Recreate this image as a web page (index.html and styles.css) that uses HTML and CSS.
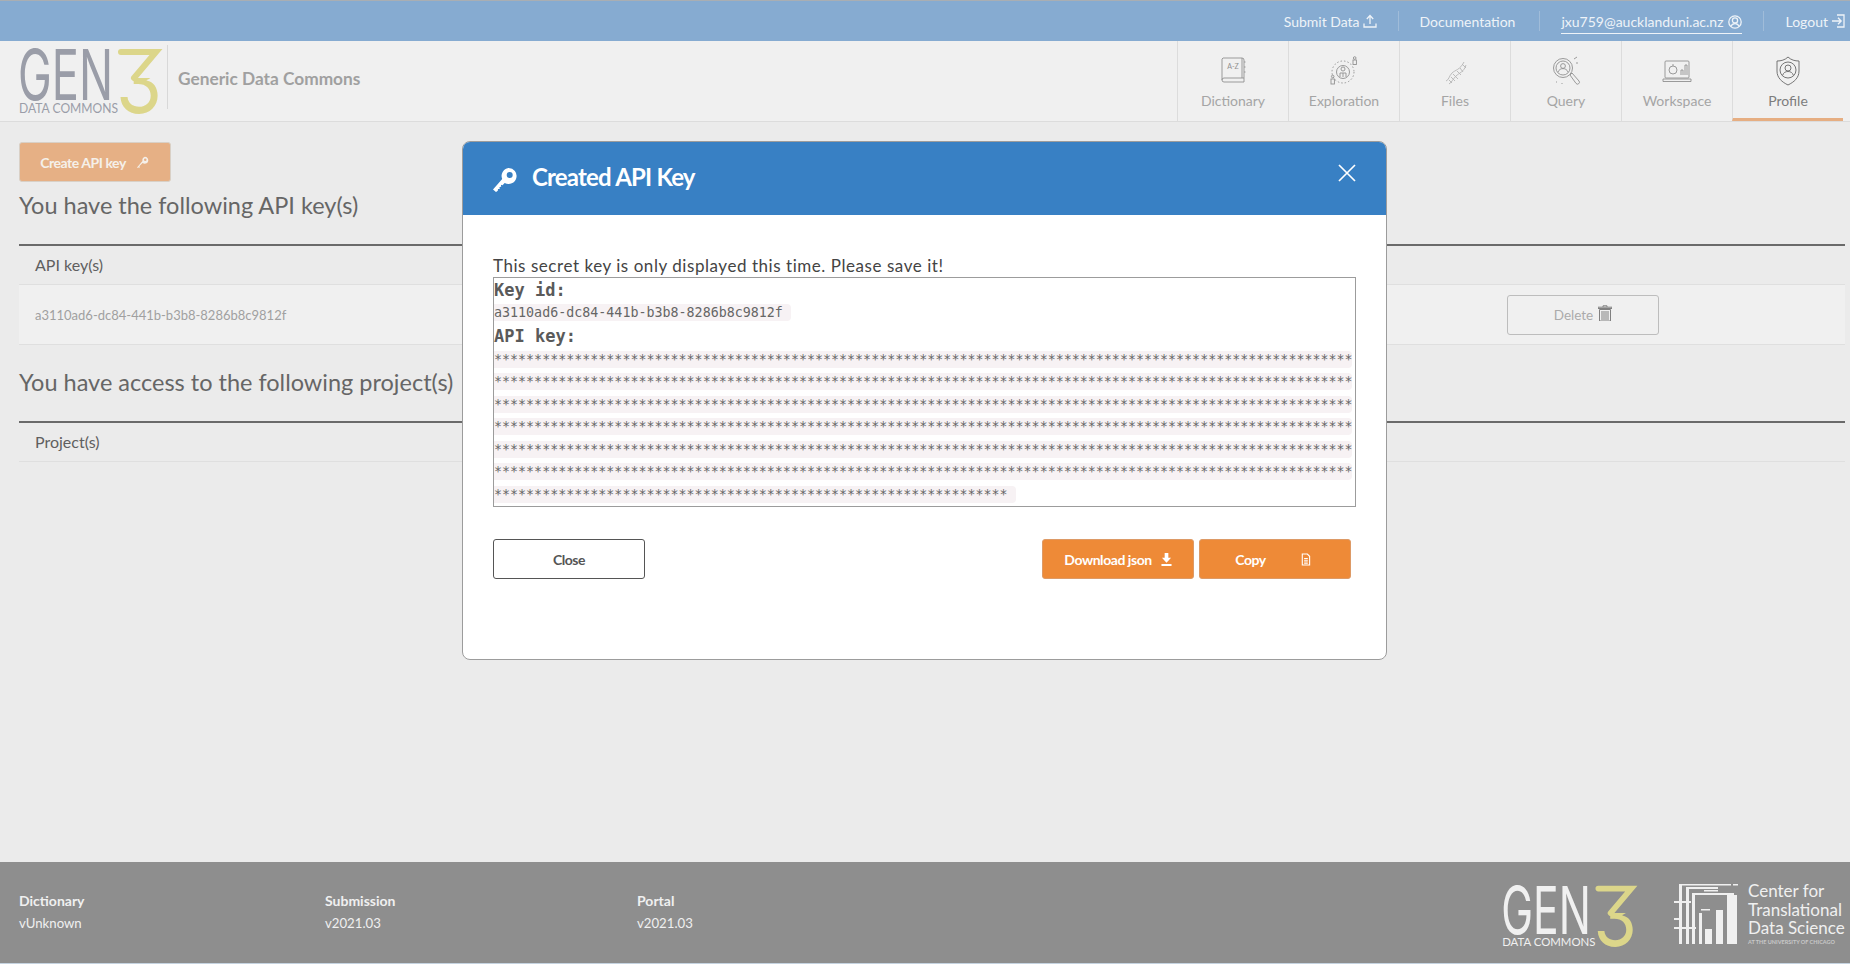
FILE: index.html
```html
<!DOCTYPE html>
<html lang="en">
<head>
<meta charset="utf-8">
<title>Generic Data Commons - Profile</title>
<link rel="stylesheet" href="styles.css">
</head>
<body>
<div class="page">
  <header class="topbar">
    <a class="top-link top-submit">Submit Data
      <svg class="top-icon" viewBox="0 0 14 14"><path d="M7 10V2M3.800 5 7 1.500 10.200 5M1 9.500V13h12V9.500" /></svg>
    </a>
    <span class="top-sep"></span>
    <a class="top-link top-doc">Documentation</a>
    <span class="top-sep"></span>
    <a class="top-link top-user">jxu759@aucklanduni.ac.nz
      <svg class="top-icon" viewBox="0 0 14 14"><circle cx="7" cy="7" r="6.200"/><circle cx="7" cy="5.400" r="2.600"/><path d="M2.800 11.600c.8-2 2.400-3 4.200-3s3.400 1 4.200 3"/></svg>
    </a>
    <span class="top-sep"></span>
    <a class="top-link top-logout">Logout
      <svg class="top-icon" viewBox="0 0 14 14"><path d="M6 1H13V13H6M1 7H10M7 3.800 10.200 7 7 10.200"/></svg>
    </a>
  </header>

  <nav class="navbar">
    <div class="brand">
      <svg class="logo" viewBox="0 0 145 70" width="145" height="70">
        <defs><clipPath id="bowl"><rect x="96" y="33" width="50" height="40"/></clipPath></defs>
        <text class="logo-gen" x="-1" y="55" textLength="95" lengthAdjust="spacingAndGlyphs">GEN</text>
        <text class="logo-three" x="97" y="68" textLength="46" lengthAdjust="spacingAndGlyphs" clip-path="url(#bowl)">3</text>
        <path class="logo-three-top" d="M102 7H137L115 33"/>
        <text class="logo-sub" x="0" y="68" textLength="99" lengthAdjust="spacingAndGlyphs">DATA COMMONS</text>
      </svg>
      <span class="brand-sep"></span>
      <span class="brand-name">Generic Data Commons</span>
    </div>
    <div class="tabs">
      <a class="tab">
        <svg class="tab-icon" viewBox="0 0 30 30"><path d="M5 2h19a2 2 0 0 1 2 2v22H6a2 2 0 0 1-2-2V3z"/><path d="M4 24a2 2 0 0 1 2-2h20M24 2v20M26 6h1.500M26 11h1.500M26 16h1.500"/><text class="tab-az" x="15" y="13" text-anchor="middle">A-Z</text></svg>
        <span>Dictionary</span>
      </a>
      <a class="tab">
        <svg class="tab-icon" viewBox="0 0 30 30"><circle cx="14" cy="16" r="11" stroke-dasharray="1.500 2"/><circle cx="14" cy="16" r="6.500"/><circle cx="14" cy="13" r="2"/><path d="M11 21v-4h6v4M14 17v4"/><rect x="24" y="4" width="3.400" height="4.500"/><circle cx="25.700" cy="2" r="1.300"/><rect x="2" y="23" width="3.400" height="5"/><circle cx="3.700" cy="20.500" r="1.300"/></svg>
        <span>Exploration</span>
      </a>
      <a class="tab">
        <svg class="tab-icon tab-icon-soft" viewBox="0 0 30 30"><path d="M6 25C9 24 9 20 12 17S20 14 24 6M9 28c3-2 4-5 7-8s8-4 10-11M9 24l3 3M11 21l4 4M13 18l5 5M17 15l4 4M20 12l3 4M22 8l4 4"/></svg>
        <span>Files</span>
      </a>
      <a class="tab">
        <svg class="tab-icon" viewBox="0 0 30 30"><circle cx="12" cy="12" r="9.500"/><circle cx="12" cy="12" r="7"/><circle cx="12" cy="10" r="2.400"/><path d="M7 16c1-2.500 3-3.400 5-3.400s4 .9 5 3.400M19 19l2-2 7 8a1.600 1.600 0 0 1-3 2.400zM23 3l3-2M25 7h2M5 26h1M11 27v1"/></svg>
        <span>Query</span>
      </a>
      <a class="tab">
        <svg class="tab-icon" viewBox="0 0 30 30"><rect x="3" y="5" width="24" height="17" rx="1"/><path d="M1 23h28v2.500H1zM19 19v-5h2v5M23 19V9h2v10"/><circle cx="11" cy="14" r="4"/><path d="M11 10V8"/></svg>
        <span>Workspace</span>
      </a>
      <a class="tab tab-active">
        <svg class="tab-icon tab-icon-dark" viewBox="0 0 30 30"><path d="M15 1c3 3 7 4 11 4v10c0 7-5 11-11 14C9 26 4 22 4 15V5c4 0 8-1 11-4z"/><circle cx="15" cy="14" r="8"/><circle cx="15" cy="12" r="3"/><path d="M9.500 19.500c1-3 3-4 5.500-4s4.500 1 5.500 4"/></svg>
        <span>Profile</span>
      </a>
    </div>
  </nav>

  <main class="content">
    <button class="btn btn-faded">Create API key
      <svg class="btn-key" viewBox="0 0 24 24"><path d="M15.500 1.500a7 7 0 1 1-4.300 12.500L4.500 20.700l1.500 1.500-2 1.800-1.500-1.500L.8 24l-.8-1L11 10a7 7 0 0 1 4.500-8.500zm1 3.500a2.500 2.500 0 1 0 0 5 2.500 2.500 0 0 0 0-5z"/></svg>
    </button>
    <h2 class="section-title section-title-first">You have the following API key(s)</h2>
    <div class="table">
      <div class="table-head">API key(s)</div>
      <div class="table-row">
        <span class="key-id">a3110ad6-dc84-441b-b3b8-8286b8c9812f</span>
        <button class="btn-delete">Delete
          <svg class="trash" viewBox="0 0 14 16"><path d="M5 2V.8h4V2M0 3.500h14V2.200H0zM1.500 4.500h11V16h-11zM4 6v9M6 6v9M8 6v9M10 6v9"/></svg>
        </button>
      </div>
    </div>
    <h2 class="section-title section-title-next">You have access to the following project(s)</h2>
    <div class="table table-next">
      <div class="table-head">Project(s)</div>
    </div>
  </main>

  <footer class="footer">
    <div class="versions">
      <div class="version version-a"><strong>Dictionary</strong><span>vUnknown</span></div>
      <div class="version version-b"><strong>Submission</strong><span>v2021.03</span></div>
      <div class="version"><strong>Portal</strong><span>v2021.03</span></div>
    </div>
    <div class="foot-logos">
      <svg class="logo-foot" viewBox="0 0 145 70" width="137" height="66">
        <text class="logo-gen logo-gen-light" x="-1" y="55" textLength="95" lengthAdjust="spacingAndGlyphs">GEN</text>
        <text class="logo-three" x="97" y="68" textLength="46" lengthAdjust="spacingAndGlyphs" clip-path="url(#bowl)">3</text>
        <path class="logo-three-top" d="M102 7H137L115 33"/>
        <text class="logo-sub logo-sub-light" x="0" y="68" textLength="99" lengthAdjust="spacingAndGlyphs">DATA COMMONS</text>
      </svg>
      <svg class="ctds-mark" viewBox="0 0 64 60" width="64" height="60">
        <path d="M5 0h52v1.500H5zM59 0h5v1.500h-5zM0 17h17v2H0zM0 34h5v2H0zM0 43h22v2H0zM30 6h14v1.500H30zM27 25h9v1.500H27zM12 3h32v2H12zM18 9h42v2H18z"/>
        <path d="M5 1h3v59H5zM12 5h3v55h-3zM18 11h3v49h-3zM25 29h3v31h-3z"/>
        <path d="M31 45h7v15h-7zM42 26h7v34h-7zM53 11h10v49H53z"/>
      </svg>
      <div class="ctds-text">
        <span>Center for</span>
        <span>Translational</span>
        <span>Data Science</span>
        <small>AT THE UNIVERSITY OF CHICAGO</small>
      </div>
    </div>
  </footer>

  <div class="modal" role="dialog">
    <div class="modal-head">
      <svg class="modal-key" viewBox="0 0 24 24"><path d="M15.500 0a8 8 0 1 1-3.800 15l-2.200 2.200-1.600-.4.300 1.900-1.700.3.200 1.900-1.700.2-.2 1.700L3 24 0 21.500 9.200 11A8 8 0 0 1 15.500 0zm1.200 4a3 3 0 1 0 0 6 3 3 0 0 0 0-6z"/></svg>
      <h1 class="modal-title">Created API Key</h1>
      <svg class="modal-close" viewBox="0 0 18 18"><path d="M1 1l16 16M17 1 1 17"/></svg>
    </div>
    <div class="modal-body">
      <p class="modal-note">This secret key is only displayed this time. Please save it!</p>
      <div class="key-box">
        <div class="key-label key-label-first">Key id:</div>
        <code class="key-row">a3110ad6-dc84-441b-b3b8-8286b8c9812f</code>
        <div class="key-label key-label-next">API key:</div>
        <code class="key-row key-row-full">***********************************************************************************************************</code>
        <code class="key-row key-row-full">***********************************************************************************************************</code>
        <code class="key-row key-row-full">***********************************************************************************************************</code>
        <code class="key-row key-row-full">***********************************************************************************************************</code>
        <code class="key-row key-row-full">***********************************************************************************************************</code>
        <code class="key-row key-row-full">***********************************************************************************************************</code>
        <code class="key-row">****************************************************************</code>
      </div>
      <div class="modal-actions">
        <button class="btn btn-plain">Close</button>
        <div class="action-group">
          <button class="btn btn-solid">Download json
            <svg class="btn-icon" viewBox="0 0 12 14"><path d="M4 0h4v5h3L6 10.500 1 5h3zM.5 12h11v2H.5z"/></svg>
          </button>
          <button class="btn btn-solid btn-copy">Copy
            <svg class="btn-icon btn-icon-line" viewBox="0 0 12 14"><path d="M2.500 1H8l2.500 2.500V13h-8zM4.500 6h4M4.500 8.500h4M4.500 11h4"/></svg>
          </button>
        </div>
      </div>
    </div>
  </div>
</div>
</body>
</html>
```

FILE: styles.css
```css
* { box-sizing: border-box; }
html, body { margin: 0; height: 100%; }
body { background: #ebebeb; font-family: Lato, "Noto Sans", sans-serif; color: #666; overflow: hidden; }

.page { height: 964px; display: flex; flex-direction: column; position: relative; }

/* top bar */
.topbar { height: 41px; flex: none; background: #86abd1; border-top: 1px solid #a9aeb3; display: flex; align-items: center; justify-content: flex-end; color: #eef3f8; font-size: 14px; padding-right: 5px; }
.top-link { display: inline-flex; align-items: center; gap: 4px; height: 24px; white-space: nowrap; }
.top-submit { gap: 3px; }
.top-doc { margin-right: 3px; }
.top-user { border-bottom: 1px solid #eef3f8; margin-top: 2px; gap: 5px; }
.top-logout { gap: 3px; }
.top-sep { width: 1px; height: 20px; background: #a0bcd9; margin: 0 21px; }
.top-icon { width: 14px; height: 14px; fill: none; stroke: #eef3f8; stroke-width: 1.300; }

/* nav */
.navbar { height: 81px; flex: none; background: #f0f0f0; border-bottom: 1px solid #dcdcdc; display: flex; justify-content: space-between; padding: 0 7px 0 19px; }
.brand { display: flex; align-items: flex-start; }
.logo { margin-top: 4px; flex: none; overflow: visible; }
.logo-gen { font-family: Inter, sans-serif; font-weight: 400; font-size: 70px; fill: #9a9da8; }
.logo-gen-light { fill: #f0f0f0; }
.logo-three { font-family: Inter, sans-serif; font-weight: 400; font-size: 88px; fill: #dcd68a; }
.logo-three-top { fill: none; stroke: #dcd68a; stroke-width: 6; stroke-linecap: round; stroke-linejoin: miter; }
.logo-sub { font-family: Lato, sans-serif; font-size: 13px; fill: #9a9da8; }
.logo-sub-light { fill: #f0f0f0; }
.brand-sep { width: 1px; height: 64px; background: #d8d8d8; margin: 4px 0 0 3px; }
.brand-name { font-size: 17.300px; font-weight: 700; color: #a0a0a0; margin: 27px 0 0 10px; }
.tabs { display: flex; }
.tab { width: 111px; height: 80px; border-left: 1px solid #dcdcdc; display: flex; flex-direction: column; align-items: center; padding-top: 15px; gap: 6px; font-size: 14px; color: #a5a5a5; }
.tab-icon { width: 30px; height: 30px; fill: none; stroke: #909090; stroke-width: .9; }
.tab-icon-soft { stroke: #b5b5b5; }
.tab-icon-dark { stroke: #666; }
.tab-az { font-family: Lato, sans-serif; font-size: 7px; fill: #909090; stroke: none; }
.tab-active { border-bottom: 3px solid #e6ae82; color: #7d7d7d; }

/* buttons */
.btn { font-family: inherit; border-radius: 3px; height: 40px; width: 152px; font-size: 14px; font-weight: 700; letter-spacing: -.45px; display: inline-flex; align-items: center; justify-content: center; cursor: pointer; padding: 0; }
.btn-faded { background: #e6b085; border: 1px solid #d9d0c6; color: #f5f0ea; gap: 11px; padding-right: 1px; }
.btn-key { width: 12px; height: 12px; fill: #f5f0ea; }
.btn-plain { background: #fff; border: 1px solid #555; color: #555; }
.btn-solid { background: #ee8a37; border: 1px solid #dd9a66; color: #fff; gap: 9px; }
.btn-copy { gap: 34px; margin-left: 5px; padding-right: 4px; }
.btn-icon { width: 11px; height: 13px; fill: #fff; }
.btn-icon-line { fill: none; stroke: #fff; stroke-width: 1.200; }

/* content */
.content { flex: 1; padding: 20px 5px 0 19px; }
.section-title { margin: 0; height: 48px; font-size: 23.500px; font-weight: 400; line-height: 48px; color: #666; }
.section-title-first { line-height: 46px; }
.section-title-next { margin-top: 13px; }
.table { margin-top: 14px; border-top: 2px solid #6a6a6a; }
.table-next { margin-top: 15px; }
.table-head { height: 39px; border-bottom: 1px solid #dfdfdf; padding-left: 16px; font-size: 16px; line-height: 38px; color: #5f5f5f; }
.table-row { height: 60px; background: #f0f0f0; border-bottom: 1px solid #dfdfdf; display: flex; align-items: center; justify-content: space-between; padding: 0 186px 0 16px; }
.key-id { font-size: 13px; color: #a0a0a0; }
.btn-delete { width: 152px; height: 40px; background: transparent; border: 1px solid #bdbdbd; border-radius: 3px; font-family: inherit; font-size: 13.500px; color: #ababab; display: inline-flex; align-items: center; justify-content: center; gap: 5px; padding: 0; }
.trash { width: 14px; height: 16px; fill: none; stroke: #808080; stroke-width: 1; margin-top: -3px; }

/* footer */
.footer { height: 102px; flex: none; background: #8e8e8e; border-bottom: 1px solid #c5d3e0; display: flex; justify-content: space-between; padding: 0 5px 0 19px; color: #f0f0f0; }
.versions { display: flex; padding-top: 30px; }
.version { display: flex; flex-direction: column; gap: 6px; font-size: 13.200px; }
.version strong { font-size: 14px; }
.version-a { width: 306px; }
.version-b { width: 312px; }
.foot-logos { display: flex; align-items: flex-start; padding-top: 21px; }
.logo-foot { flex: none; margin: -1px 35px 0 0; overflow: visible; }
.ctds-mark { fill: #f0f0f0; flex: none; margin: 1px 10px 0 0; }
.ctds-text { display: flex; flex-direction: column; font-size: 17px; line-height: 18.500px; width: 97px; white-space: nowrap; margin-top: -1px; }
.ctds-text small { font-size: 5.500px; line-height: 8px; color: #c8c8c8; font-weight: 700; }

/* modal */
.modal { position: absolute; left: 462px; top: 141px; width: 925px; height: 519px; background: #fff; border: 1px solid #9c9c9c; border-radius: 8px; overflow: hidden; display: flex; flex-direction: column; }
.modal-head { height: 73px; flex: none; background: #3880c4; display: flex; align-items: center; padding: 0 30px 4px; color: #fff; position: relative; }
.modal-key { width: 24px; height: 24px; fill: #fff; flex: none; margin-top: 6px; }
.modal-title { font-size: 24px; font-weight: 700; letter-spacing: -.8px; margin: 0 0 0 15px; }
.modal-close { position: absolute; right: 30px; top: 22px; width: 18px; height: 18px; fill: none; stroke: #fff; stroke-width: 1.700; }
.modal-body { padding: 39px 30px 0; }
.modal-note { margin: 0; font-size: 17px; letter-spacing: .55px; line-height: 23px; color: #444; }
.key-box { width: 863px; height: 230px; border: 1px solid #9c9c9c; font-family: "DejaVu Sans Mono", "Liberation Mono", monospace; padding-top: 1px; display: flex; flex-direction: column; align-items: flex-start; }
.key-label { flex: none; font-size: 17px; font-weight: 700; color: #5a5a5a; line-height: 22px; height: 22.900px; }
.key-label-first { height: 22px; }
.key-label-next { margin-top: 1.500px; }
.key-row { flex: none; display: block; height: 17px; line-height: 17px; margin: 3px 0 2.500px; padding-right: 8px; font-family: inherit; font-size: 13.330px; color: #666; background: #f7f2f4; border-radius: 0 4px 4px 0; white-space: nowrap; }
.key-row-full { width: 858px; padding-right: 0; overflow: hidden; }
.modal-actions { display: flex; justify-content: space-between; margin-top: 32px; padding-right: 5px; }
.action-group { display: flex; }
```
